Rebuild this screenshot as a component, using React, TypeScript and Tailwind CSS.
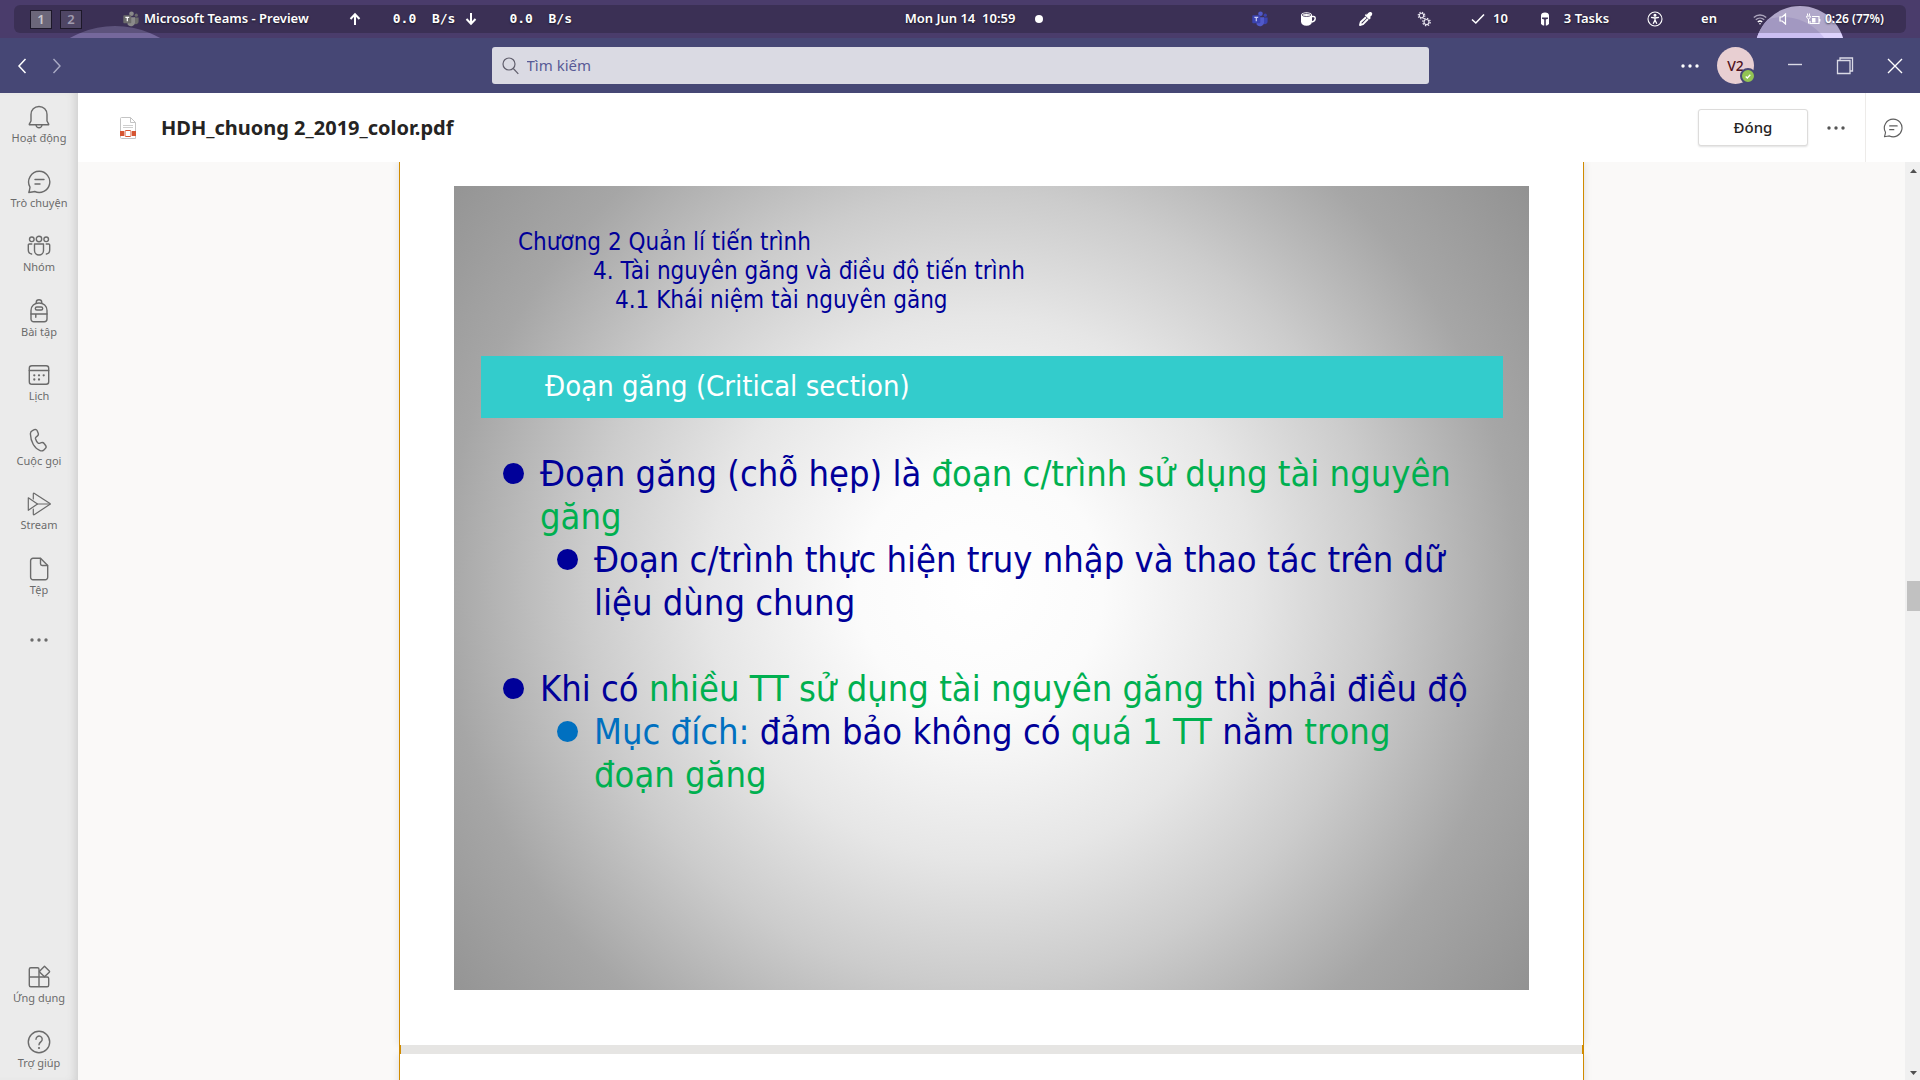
import type { ReactNode } from "react";

function Svg({ size = 24, children, className = "", stroke = 1.4 }: { size?: number; children: ReactNode; className?: string; stroke?: number }) {
  return (
    <svg width={size} height={size} viewBox="0 0 24 24" fill="none" stroke="currentColor" strokeWidth={stroke} strokeLinecap="round" strokeLinejoin="round" className={"shrink-0 " + className} aria-hidden="true">
      {children}
    </svg>
  );
}

const chatPaths = (
  <>
    <path d="M12.3 1.3a10.6 10.6 0 1 1-4.6 20.2c-1.900 .3-3.900 .7-5.900 1 .6-1.900 1-3.700 1.200-5.400A10.600 10.600 0 0 1 12.300 1.300z" />
    <path d="M8 9.500h9M8 14h5" />
  </>
);

const icons: Record<string, ReactNode> = {
  bell: (
    <>
      <path d="M12 1.500c-4.700 0-8 3.600-8 8v6.500L2.300 19.200c-.1.300 0 .6.400.600h18.600c.4 0 .5-.3.400-.600L20 16V9.500c0-4.400-3.300-8-8-8z" />
      <path d="M9 20c.3 1.700 1.500 2.800 3 2.800s2.700-1.100 3-2.800" />
    </>
  ),
  chat: chatPaths,
  teams: (
    <>
      <circle cx="12" cy="5" r="2.700" />
      <circle cx="4.800" cy="5.300" r="2.300" />
      <circle cx="19.200" cy="5.300" r="2.300" />
      <path d="M7.500 10h9v6.500a4.500 4.500 0 0 1-9 0z" />
      <path d="M4.800 10H2.300c-.6 0-1 .4-1 1v5c0 2 1.300 3.600 3.300 4M19.200 10h2.500c.6 0 1 .4 1 1v5c0 2-1.300 3.600-3.300 4" />
    </>
  ),
  bag: (
    <>
      <path d="M4 11.500C4 7 7.500 4 12 4s8 3 8 7.500V20a2.700 2.700 0 0 1-2.700 2.700H6.700A2.700 2.700 0 0 1 4 20z" />
      <path d="M9.300 4V3a2.700 2.200 0 0 1 5.400 0v1" />
      <rect x="8.300" y="8" width="7.400" height="3" rx="1.500" />
      <path d="M4 15h16M8.800 15v3.300" />
    </>
  ),
  calendar: (
    <>
      <rect x="2.300" y="2.700" width="19.400" height="18.600" rx="2.500" />
      <path d="M2.300 7.500h19.400" />
      <g strokeWidth="2.300">
        <path d="M7.300 12.300h0M12 12.300h0M16.700 12.300h0M7.300 16.500h0M12 16.500h0" />
      </g>
    </>
  ),
  phone: (
    <path d="M5.400 2.600l1.900-.9c1.200-.5 2.500 0 3 1.200l.9 2.300c.4 1 .1 2-.7 2.700l-1.600 1.400c-.4.400-.5.900-.4 1.400.5 1.700 1.300 3.100 2.500 4.300.4.400.9.500 1.400.3l2-.7c1-.3 2.100 0 2.700.9l1.500 2c.7 1 .6 2.300-.3 3.100l-1.400 1.300c-1 .9-2.500 1.200-3.800.7C7.600 20.500 3.700 14 3.400 6c-.1-1.500.7-2.800 2-3.400z" />
  ),
  stream: (
    <g strokeWidth="1.200">
      <path d="M6.300 7V1.800c0-.5.400-.7.800-.5L23 11.500c.3.200.3.600 0 .8L7.100 22.800c-.4.200-.8 0-.8-.5V17" />
      <path d="M1.300 5.800v12.500L10.500 12z" />
      <path d="M10.500 12H23" />
    </g>
  ),
  file: (
    <>
      <path d="M6 1.300h7.500L20.700 8.500v11.800a2.400 2.400 0 0 1-2.400 2.400H6a2.400 2.400 0 0 1-2.400-2.400V3.700A2.400 2.400 0 0 1 6 1.300z" />
      <path d="M13.500 1.500v5.300c0 1 .7 1.700 1.700 1.700h5.300" />
    </>
  ),
  apps: (
    <>
      <path d="M12 12V4.200c0-.9-.6-1.500-1.500-1.500H3.800c-.9 0-1.500.6-1.500 1.500v16c0 .9.600 1.500 1.500 1.500h16.400c.9 0 1.500-.6 1.500-1.500v-6.700c0-.9-.6-1.500-1.500-1.500H2.300M12 12v9.700" />
      <path d="M17.500 1.300l4.800 4.700c.4.400.4.800 0 1.200l-4.800 4.600-4.700-4.600c-.4-.4-.4-.8 0-1.200z" />
    </>
  ),
  help: (
    <>
      <circle cx="12" cy="12" r="10.700" />
      <path d="M9 9.200a3.100 3.100 0 1 1 5 2.400c-1.200 1-2 1.700-2 3.200" />
      <path d="M12 18h0" strokeWidth="2.200" />
    </>
  ),
};

const mainNav: [string, string][] = [
  ["bell", "Hoạt động"],
  ["chat", "Trò chuyện"],
  ["teams", "Nhóm"],
  ["bag", "Bài tập"],
  ["calendar", "Lịch"],
  ["phone", "Cuộc gọi"],
  ["stream", "Stream"],
  ["file", "Tệp"],
];

function NavItem({ icon, label }: { icon: string; label: string }) {
  return (
    <a href="#" className="flex flex-1 flex-col items-center pt-3 text-[#6b6b6b]">
      <Svg>{icons[icon]}</Svg>
      <span className="text-[11px] leading-[18px]">{label}</span>
    </a>
  );
}

function Dots({ className = "" }: { className?: string }) {
  return (
    <svg width="18" height="4" viewBox="0 0 18 4" fill="currentColor" className={className} aria-hidden="true">
      <circle cx="2" cy="2" r="1.700" />
      <circle cx="9" cy="2" r="1.700" />
      <circle cx="16" cy="2" r="1.700" />
    </svg>
  );
}

function TeamsLogo({ body, dark, letter }: { body: string; dark: string; letter: string }) {
  return (
    <svg width="16" height="16" viewBox="0 0 16 16" className="shrink-0" aria-hidden="true">
      <circle cx="13.300" cy="4.200" r="1.600" fill={dark} />
      <path d="M11 6.500h4.600v4a2.500 2.500 0 0 1-4.600 1.500z" fill={dark} />
      <circle cx="8.500" cy="2.800" r="2.300" fill={body} />
      <path d="M5 6.300h7v5a4 4 0 0 1-7.500 1.900z" fill={body} />
      <rect x="0.300" y="4.200" width="8" height="8" rx="0.700" fill={dark} />
      <path d="M2.400 6.300h3.800M4.300 6.300v4" stroke={letter} strokeWidth="1.200" />
    </svg>
  );
}

function Arrow({ down = false }: { down?: boolean }) {
  return (
    <svg width="12" height="14" viewBox="0 0 12 14" fill="none" stroke="currentColor" strokeWidth="2" className={down ? "rotate-180" : ""} aria-hidden="true">
      <path d="M6 13V2.500M1.500 7L6 2.200 10.500 7" />
    </svg>
  );
}

function SystemBar() {
  return (
    <header className="relative h-[38px] shrink-0 overflow-hidden bg-[#4a3c6b] px-[14px] pt-[5px] text-white">
      <svg className="absolute top-0 left-0" width="220" height="38" aria-hidden="true">
        <circle cx="115" cy="117" r="91" fill="#75689c" />
      </svg>
      <svg className="absolute top-0 right-0" width="220" height="38" aria-hidden="true">
        <clipPath id="moon">
          <circle cx="100" cy="51" r="45" />
        </clipPath>
        <circle cx="100" cy="51" r="45" fill="#ded3fd" />
        <circle cx="83" cy="68" r="51" fill="#cbbff2" clipPath="url(#moon)" />
      </svg>
      <div className="relative flex h-7 items-center rounded-md bg-black/20 text-[13px] font-semibold [text-shadow:0_1px_2px_rgba(0,0,0,0.6)]">
        <div className="flex flex-1 items-center">
          <button className="ml-4 h-[19px] w-[22px] border border-[#1d1829] bg-[#6c677a] text-[13px] leading-4 text-[#c9c7cf]">1</button>
          <button className="ml-2 h-[19px] w-[22px] border border-[#1d1829] bg-[#4f4665] text-[13px] leading-4 text-[#a09bae]">2</button>
          <div className="ml-[41px] flex items-center gap-[5px]">
            <TeamsLogo body="#8a8a8a" dark="#6b6b6b" letter="#ffffff" />
            <span className="whitespace-nowrap">Microsoft Teams - Preview</span>
          </div>
          <div className="ml-10 flex items-center whitespace-pre font-['DejaVu_Sans_Mono',monospace] font-bold">
            <Arrow />
            <span className="ml-8">0.0  B/s</span>
            <span className="ml-[10px]"><Arrow down /></span>
            <span className="ml-8">0.0  B/s</span>
          </div>
        </div>
        <div className="flex items-center gap-5 pl-7">
          <span className="whitespace-pre">Mon Jun 14  10:59</span>
          <span className="size-2 rounded-full bg-white" />
        </div>
        <div className="flex flex-1 items-center justify-end">
          <TeamsLogo body="#5059c9" dark="#3b43b0" letter="#c9cdf5" />
          <svg width="16" height="16" viewBox="0 0 16 16" className="ml-8" aria-hidden="true">
            <path d="M1 4c0-1.700 2.500-2.800 5.500-2.800S12 2.300 12 4v6.500c0 2.500-2 4.300-5.500 4.300S1 13 1 10.500z" fill="#fff" />
            <ellipse cx="6.500" cy="4" rx="4.300" ry="1.500" fill="none" stroke="#3b3054" strokeWidth="0.800" />
            <path d="M12 5.500h1.500c1.200 0 1.700.8 1.700 2s-1 3-3.200 3.500" fill="none" stroke="#fff" strokeWidth="1.400" />
          </svg>
          <svg width="15" height="16" viewBox="0 0 15 16" className="ml-[42px]" aria-hidden="true">
            <path d="M8.500 4.200c1.300-2.400 3-3.900 4.800-3 1.800 1.200.9 3.500-1.300 4.700l.9 1-1.700 1.700-4.400-4.400 1.600-1.600z" fill="#fff" />
            <path d="M8 6.200L2.800 11l-.8 3 3-.8L10 8" fill="none" stroke="#fff" strokeWidth="1.900" strokeLinejoin="round" />
          </svg>
          <svg width="14" height="16" viewBox="0 0 14 16" fill="none" stroke="#e6e3ee" className="ml-11" aria-hidden="true">
            <circle cx="4.500" cy="4.500" r="2.200" strokeWidth="1.100" />
            <circle cx="4.500" cy="4.500" r="3.300" strokeWidth="1.200" strokeDasharray="1.300 1.300" />
            <circle cx="9.500" cy="11" r="2.500" strokeWidth="1.200" />
            <circle cx="9.500" cy="11" r="3.700" strokeWidth="1.300" strokeDasharray="1.500 1.400" />
          </svg>
          <svg width="14" height="12" viewBox="0 0 14 12" fill="none" stroke="#fff" strokeWidth="1.600" className="ml-10" aria-hidden="true">
            <path d="M1 6.500l3.800 3.500L13 1.500" />
          </svg>
          <span className="ml-2">10</span>
          <svg width="10" height="14" viewBox="0 0 10 14" fill="#fff" className="ml-8" aria-hidden="true">
            <path d="M1 3.500C1 1.500 2.500.5 5 .5s4 1 4 3v8.500L7 13.500H5.800V7.500L8 6.800V5.500H2v1.300l2.200.7v6H3L1 12z" />
          </svg>
          <span className="ml-[14px] whitespace-nowrap">3 Tasks</span>
          <svg width="16" height="16" viewBox="0 0 16 16" fill="none" stroke="#fff" strokeWidth="1.100" className="ml-[38px]" aria-hidden="true">
            <circle cx="8" cy="8" r="7" />
            <path d="M4 6.300l4 .7 4-.7M8 7v2.500M8 9l-1.800 3.800M8 9l1.800 3.800" strokeWidth="1.300" />
            <circle cx="8" cy="4.300" r="1" fill="#fff" />
          </svg>
          <span className="ml-[38px]">en</span>
          <svg width="14" height="12" viewBox="0 0 14 12" fill="none" stroke="#aaa4bb" strokeWidth="1.400" className="ml-9" aria-hidden="true">
            <path d="M.8 4.500c3.500-3.300 8.900-3.300 12.400 0" />
            <path d="M2.800 6.800c2.400-2.200 6-2.200 8.400 0" />
            <path d="M4.800 9c1.300-1.100 3.100-1.100 4.400 0" stroke="#fff" />
            <circle cx="7" cy="10.700" r="0.800" fill="#fff" stroke="none" />
          </svg>
          <svg width="9" height="12" viewBox="0 0 9 12" fill="none" stroke="#fff" strokeWidth="1.200" className="ml-3" aria-hidden="true">
            <path d="M1 4v4h2.200L6.500 11V1L3.200 4z" />
          </svg>
          <svg width="15" height="13" viewBox="0 0 15 13" fill="none" stroke="#fff" strokeWidth="1.200" className="ml-[18px]" aria-hidden="true">
            <path d="M6 3.500h7v7H4V8M13.800 6v2.500" />
            <path d="M1.500 .5v2M3.500 .5v2M.7 3h3.600v1.500L2.500 6 .7 4.500zM2.500 6v4.500" strokeWidth="1" />
            <path d="M6 5h3.500v4.500H6z" fill="#fff" stroke="none" />
          </svg>
          <span className="mr-[22px] ml-1 text-xs whitespace-nowrap">0:26 (77%)</span>
        </div>
      </div>
    </header>
  );
}

function TitleBar() {
  return (
    <div className="flex h-[55px] shrink-0 items-center bg-[#464775] text-white">
      <div className="flex flex-1 items-center gap-[22px] pl-[17px]">
        <button aria-label="Quay lại">
          <svg width="12" height="16" viewBox="0 0 12 16" fill="none" stroke="#fff" strokeWidth="1.500"><path d="M8.500 1L2 8l6.500 7" /></svg>
        </button>
        <button aria-label="Tiếp">
          <svg width="12" height="16" viewBox="0 0 12 16" fill="none" stroke="#a9aac4" strokeWidth="1.400"><path d="M2.500 1L9 8l-6.500 7" /></svg>
        </button>
      </div>
      <label className="flex h-[37px] w-[937px] items-center gap-2 rounded-[3px] bg-[#dadae3] px-[10px]">
        <svg width="17" height="18" viewBox="0 0 17 18" fill="none" stroke="#605e6c" strokeWidth="1.200" aria-hidden="true">
          <circle cx="7" cy="7" r="6" />
          <path d="M11.300 11.500l5 5.300" />
        </svg>
        <input type="text" aria-label="Tìm kiếm" placeholder="Tìm kiếm" className="min-w-0 flex-1 bg-transparent text-[15px] outline-none placeholder:text-[#585a96]" />
      </label>
      <div className="flex flex-1 items-center justify-end pr-[17px]">
        <button aria-label="Tùy chọn"><Dots /></button>
        <button className="relative ml-[18px] size-[37px] rounded-full bg-[#e8cfd2] text-sm font-medium text-[#4f1220]">
          V2
          <span className="absolute -right-[2px] bottom-0 flex size-4 items-center justify-center rounded-full border-2 border-[#464775] bg-[#92c353]">
            <svg width="6" height="5" viewBox="0 0 6 5" fill="none" stroke="#fff" strokeWidth="1.300" aria-hidden="true"><path d="M.7 2.500l1.600 1.500L5.300.8" /></svg>
          </span>
        </button>
        <button aria-label="Thu nhỏ" className="ml-[33px]">
          <svg width="16" height="16" viewBox="0 0 16 16" stroke="#dadae6" strokeWidth="1.400"><path d="M1 6.500h14" /></svg>
        </button>
        <button aria-label="Khôi phục" className="ml-[33px]">
          <svg width="18" height="18" viewBox="0 0 18 18" fill="none" stroke="#dadae6" strokeWidth="1.300"><path d="M1.500 3.500h12.500v13H1.500zM4 3.500V1h12.500v13H14" /></svg>
        </button>
        <button aria-label="Đóng cửa sổ" className="ml-[33px]">
          <svg width="16" height="16" viewBox="0 0 16 16" fill="none" stroke="#fff" strokeWidth="1.400"><path d="M1 1l14 14M15 1L1 15" /></svg>
        </button>
      </div>
    </div>
  );
}

function Sidebar() {
  return (
    <nav className="flex w-[78px] shrink-0 flex-col bg-[#ebebeb] shadow-[inset_-8px_0_8px_-5px_#cfcfcf]">
      <div className="flex h-[516px] flex-col">
        {mainNav.map(([icon, label]) => (
          <NavItem key={label} icon={icon} label={label} />
        ))}
      </div>
      <button aria-label="Thêm ứng dụng" className="mt-[29px] self-center text-[#6b6b6b]">
        <Dots />
      </button>
      <div className="mt-auto mb-2 flex flex-col gap-[11px]">
        <NavItem icon="apps" label="Ứng dụng" />
        <NavItem icon="help" label="Trợ giúp" />
      </div>
    </nav>
  );
}

function FileHeader() {
  return (
    <div className="flex h-[69px] shrink-0 items-center bg-white text-[#252423]">
      <svg width="20" height="22" viewBox="0 0 20 22" fill="none" className="ml-10 shrink-0" aria-hidden="true">
        <path d="M3.500.5h9L17.500 5.500v16h-14c-.6 0-1-.4-1-1v-19c0-.6.4-1 1-1z" fill="#fff" stroke="#c4c4c4" />
        <path d="M12.500.5v5h5" stroke="#c4c4c4" />
        <path d="M5 8.500h10M5 10.500h10" stroke="#cfcfcf" />
        <rect x="2" y="14" width="4" height="5" fill="#d65532" />
        <rect x="14" y="14" width="4" height="5" fill="#d65532" />
        <rect x="7" y="13.500" width="6" height="6" rx="1" fill="#fff" stroke="#d65532" />
      </svg>
      <h1 className="ml-[23px] flex-1 text-[20px] font-bold">HDH_chuong 2_2019_color.pdf</h1>
      <button className="h-[37px] w-[110px] rounded-[3px] border border-[#dddcdb] bg-white text-[15px] font-medium shadow-[0_1px_2px_rgba(0,0,0,0.12)]">Đóng</button>
      <button aria-label="Tùy chọn khác" className="ml-[19px] mr-5 text-[#555]"><Dots /></button>
      <div className="flex w-[55px] items-center justify-center self-stretch border-l border-[#edebe9] text-[#5f5f5f]">
        <button aria-label="Mở cuộc trò chuyện"><Svg size={20} stroke={1.4}>{chatPaths}</Svg></button>
      </div>
    </div>
  );
}

const G = ({ children }: { children: ReactNode }) => <span className="text-[#00b050]">{children}</span>;

function Bullet({ nested = false, blue = false, children }: { nested?: boolean; blue?: boolean; children: ReactNode }) {
  return (
    <li className={nested ? "flex gap-4 pl-[54px]" : "flex gap-4"}>
      <span className={blue ? "mt-[11px] size-[21px] shrink-0 rounded-full bg-[#0070c0]" : "mt-[11px] size-[21px] shrink-0 rounded-full bg-[#000099]"} />
      <p>{children}</p>
    </li>
  );
}

function Slide() {
  return (
    <section className="min-h-[804px] bg-[radial-gradient(circle_farthest-corner_at_49%_50%,#ffffff_0%,#fbfbfb_18%,#e6e6e6_40%,#cccccc_58%,#a6a6a6_79%,#929292_100%)] pt-[42px] font-['DejaVu_Sans_Condensed','DejaVu_Sans',sans-serif] text-[#000099]">
      <div className="pl-16 text-2xl leading-[29px]">
        <p>Chương 2 Quản lí tiến trình</p>
        <p className="pl-[75px]">4. Tài nguyên găng và điều độ tiến trình</p>
        <p className="pl-[97px]">4.1 Khái niệm tài nguyên găng</p>
      </div>
      <h2 className="mt-[41px] mr-[26px] ml-[27px] flex h-[62px] items-center bg-[#33cccc] pl-16 text-[29px] text-white">Đoạn găng (Critical section)</h2>
      <ul className="mt-[34px] pl-[49px] text-[36px] leading-[43px]">
        <Bullet>
          Đoạn găng (chỗ hẹp) là <G>đoạn c/trình sử dụng tài nguyên<br />găng</G>
        </Bullet>
        <Bullet nested>
          Đoạn c/trình thực hiện truy nhập và thao tác trên dữ<br />liệu dùng chung
        </Bullet>
        <li className="h-[43px]" aria-hidden="true" />
        <Bullet>
          Khi có <G>nhiều TT sử dụng tài nguyên găng</G> thì phải điều độ
        </Bullet>
        <Bullet nested blue>
          <span className="text-[#0070c0]">Mục đích:</span> đảm bảo không có <G>quá 1 TT</G> nằm <G>trong<br />đoạn găng</G>
        </Bullet>
      </ul>
    </section>
  );
}

function Scrollbar() {
  return (
    <div className="flex w-[15px] shrink-0 flex-col items-end bg-[#f0f0f0]" aria-hidden="true">
      <svg width="13" height="17" viewBox="0 0 13 17" fill="#505050"><path d="M3 11l3.500-4 3.500 4z" /></svg>
      <div className="flex-[402]" />
      <div className="h-[30px] w-[13px] bg-[#c1c1c1]" />
      <div className="flex-[452]" />
      <svg width="13" height="17" viewBox="0 0 13 17" fill="#505050"><path d="M3 8l3.500 4L10 8z" /></svg>
    </div>
  );
}

export default function App() {
  return (
    <div className="flex h-screen flex-col overflow-hidden font-['Noto_Sans',sans-serif]">
      <SystemBar />
      <TitleBar />
      <div className="flex min-h-0 flex-1">
        <Sidebar />
        <main className="flex min-w-0 flex-1 flex-col">
          <FileHeader />
          <div className="flex min-h-0 flex-1 bg-[#faf9f8]">
            <div className="min-w-0 flex-1 overflow-hidden">
              <div className="mx-auto w-[1185px]">
                <div className="border-x border-[#d18b00] bg-white px-[54px] pt-6 pb-[55px] shadow-[0_0_8px_rgba(0,0,0,0.12)]">
                  <Slide />
                </div>
                <div className="relative h-[9px] border-x-2 border-[#d18b00] bg-[#e6e5e3]" />
                <div className="h-40 border-x border-[#d18b00] bg-white shadow-[0_0_8px_rgba(0,0,0,0.12)]" />
              </div>
            </div>
            <Scrollbar />
          </div>
        </main>
      </div>
    </div>
  );
}
